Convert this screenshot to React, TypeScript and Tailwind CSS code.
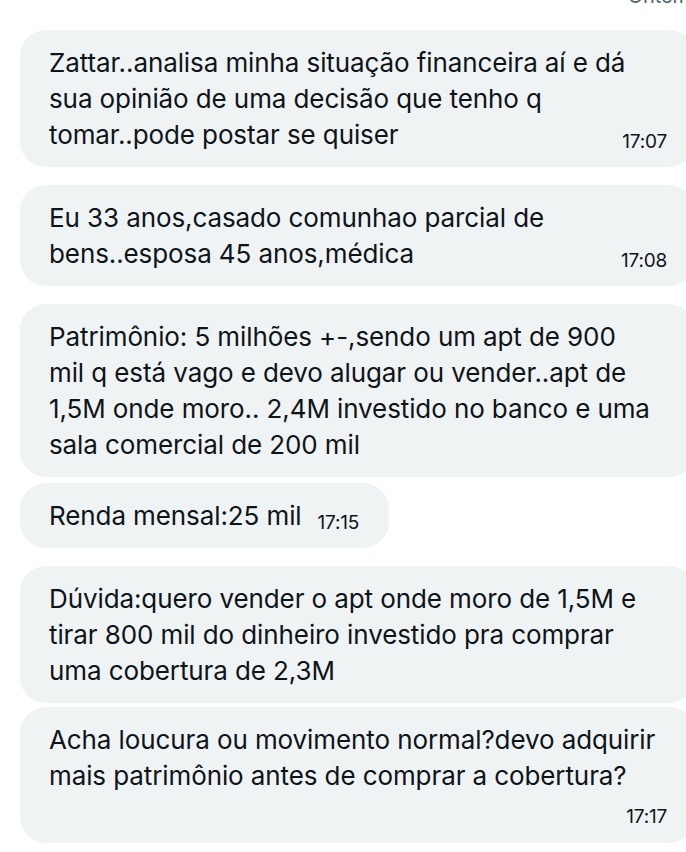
import React from "react";

type Msg = {
    lines: string[];
    time?: string;
    timeBelow?: boolean;
    fit?: boolean;
    mt: string;
};

const messages: Msg[] = [
    {
        lines: ["Zattar..analisa minha situação financeira aí e dá", "sua opinião de uma decisão que tenho q", "tomar..pode postar se quiser"],
        time: "17:07",
        mt: "mt-[30px]",
    },
    {
        lines: ["Eu 33 anos,casado comunhao parcial de", "bens..esposa 45 anos,médica"],
        time: "17:08",
        mt: "mt-[18px]",
    },
    {
        lines: [
            "Patrimônio: 5 milhões +-,sendo um apt de 900",
            "mil q está vago e devo alugar ou vender..apt de",
            "1,5M onde moro.. 2,4M investido no banco e uma",
            "sala comercial de 200 mil",
        ],
        mt: "mt-[18px]",
    },
    {
        lines: ["Renda mensal:25 mil"],
        time: "17:15",
        fit: true,
        mt: "mt-[6px]",
    },
    {
        lines: ["Dúvida:quero vender o apt onde moro de 1,5M e", "tirar 800 mil do dinheiro investido pra comprar", "uma cobertura de 2,3M"],
        mt: "mt-[18px]",
    },
    {
        lines: ["Acha loucura ou movimento normal?devo adquirir", "mais patrimônio antes de comprar a cobertura?"],
        time: "17:17",
        timeBelow: true,
        mt: "mt-[4px]",
    },
];

const Time = ({ t }: { t: string }) => (
    <span className="text-[19px] leading-[24px] text-[#0f1419] tracking-[-0.2px]">{t}</span>
);

const Bubble = ({ msg }: { msg: Msg }) => {
    const last = msg.lines.length - 1;
    return (
        <div
            className={`${msg.mt} ${msg.fit ? "w-fit pr-[30px]" : "w-[675px] pr-[28px]"} bg-[#eff3f4] rounded-[26px] pl-[29px] pt-[15px] pb-[14px]`}
        >
            {msg.lines.map((line, i) =>
                i === last && msg.time && !msg.timeBelow ? (
                    <div key={i} className="flex items-baseline h-[36px] leading-[36px]">
                        <span className="whitespace-nowrap">{line}</span>
                        <span className={`relative top-[4px] ${msg.fit ? "ml-[16px]" : "ml-auto"}`}>
                            <Time t={msg.time} />
                        </span>
                    </div>
                ) : (
                    <div key={i} className="leading-[36px] whitespace-nowrap">
                        {line}
                    </div>
                )
            )}
            {msg.time && msg.timeBelow && (
                <div className="flex justify-end mt-[11px] h-[24px]">
                    <Time t={msg.time} />
                </div>
            )}
        </div>
    );
};

export default function App() {
    return (
        <div className="w-[686px] h-[852px] overflow-hidden bg-white relative font-['Inter',sans-serif] text-[26px] text-[#0f1419] tracking-[-0.1px]">
            <div className="absolute top-[-19px] right-[-4px] text-[20px] text-[#536471]">Ontem</div>
            <div className="flex flex-col pl-[20px]">
                {messages.map((m, i) => (
                    <Bubble key={i} msg={m} />
                ))}
            </div>
        </div>
    );
}
